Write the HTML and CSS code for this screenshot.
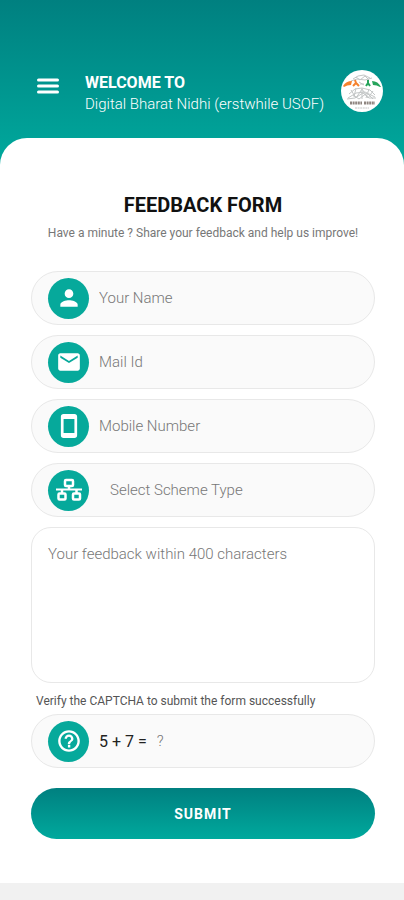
FILE: index.html
```
<!DOCTYPE html>
<html lang="en">
<head>
    <meta charset="UTF-8">
    <meta name="viewport" content="width=device-width, initial-scale=1.0">
    <title>Feedback Form</title>
    <link rel="stylesheet" href="styles.css">
</head>
<body>
    <header class="header">
        <button type="button" class="menu-btn" aria-label="Menu">
            <svg viewBox="0 0 22 16" width="22" height="16"><path d="M1.500 2h19M1.500 8h19M1.500 14h19" stroke="#fff" stroke-width="3" stroke-linecap="round"/></svg>
        </button>
        <div class="welcome">
            <p class="welcome-title">WELCOME TO</p>
            <p class="welcome-name">Digital Bharat Nidhi (erstwhile USOF)</p>
        </div>
        <svg class="logo" viewBox="0 0 42 42" role="img" aria-label="Digital Bharat Nidhi logo">
            <circle cx="21" cy="21" r="21" fill="#fff"/>
            <g fill="none" stroke="#c3c6c6" stroke-width="1">
                <path d="M12 9l5-3 6-1 6 3M10 11l6-2 8 1 7-2M15 7l4 3 5-4 4 4M19 14h4M18 12l5 3"/>
                <path d="M8 24l6-5 7-1 8 2 5 5M7 28l8-5 9-1 10 5M10 20l5 8 6-9 6 9 5-7M6 29l8-1 8-5 6 5h7M12 25l6 4 8-6 6 6M15 18l-2 9M21 18v11M28 19l-3 9"/>
            </g>
            <path d="M2 16q3-5 9-5l-1 4q-4 0-7 2z" fill="#f5822d"/>
            <path d="M40 17q-3-6-9-6l1 4q4 0 7 2z" fill="#26a45b"/>
            <path d="M14 10l1 3-3 3M15 13l3 3" stroke="#f5822d" stroke-width="2" fill="none"/>
            <path d="M27 10v3l-2 3M27 13l2 3" stroke="#26a45b" stroke-width="2" fill="none"/>
            <path d="M9 33h12M23 33h11" stroke="#8f8580" stroke-width="3" stroke-dasharray="2 0.600"/>
            <path d="M14 38h14" stroke="#c5c5c5" stroke-width="1" stroke-dasharray="2 0.600"/>
        </svg>
    </header>

    <main class="sheet">
        <h1 class="title">FEEDBACK FORM</h1>
        <p class="subtitle">Have a minute ? Share your feedback and help us improve!</p>

        <form class="form">
            <!-- text fields -->
            <div class="field">
                <label class="icon" for="name" aria-label="Your Name">
                    <svg viewBox="0 0 24 24"><path d="M12 12c2.200 0 4-1.800 4-4s-1.800-4-4-4-4 1.800-4 4 1.800 4 4 4zm0 2c-2.700 0-8 1.300-8 4v2h16v-2c0-2.700-5.300-4-8-4z"/></svg>
                </label>
                <input type="text" id="name" placeholder="Your Name">
            </div>
            <div class="field">
                <label class="icon" for="mail" aria-label="Mail Id">
                    <svg viewBox="0 0 24 24"><path d="M20 4H4c-1.100 0-2 .9-2 2v12c0 1.100.9 2 2 2h16c1.100 0 2-.9 2-2V6c0-1.100-.9-2-2-2zm0 4l-8 5-8-5V6l8 5 8-5z"/></svg>
                </label>
                <input type="email" id="mail" placeholder="Mail Id">
            </div>
            <div class="field">
                <label class="icon" for="mobile" aria-label="Mobile Number">
                    <svg viewBox="0 0 24 24"><path d="M17 1H7c-1.600 0-2.500.9-2.500 2.500v17c0 1.600.9 2.500 2.500 2.500h10c1.600 0 2.500-.9 2.500-2.500v-17C19.500 1.900 18.600 1 17 1zm0 17.500H7v-13h10z"/></svg>
                </label>
                <input type="tel" id="mobile" placeholder="Mobile Number">
            </div>
            <div class="field">
                <label class="icon" for="scheme" aria-label="Scheme Type">
                    <svg viewBox="0 0 26 26">
                        <g fill="none" stroke="#fff" stroke-width="2.500">
                            <rect x="9" y="3" width="8" height="6" rx="1"/>
                            <rect x="2.500" y="16.500" width="7" height="6" rx="1"/>
                            <rect x="17" y="16.500" width="7" height="6" rx="1"/>
                            <path d="M13 9v4M6 13v3M20.500 13v3"/>
                            <path d="M0 12.500h26" stroke-width="2"/>
                        </g>
                    </svg>
                </label>
                <select id="scheme">
                    <option>Select Scheme Type</option>
                </select>
            </div>
            <textarea class="message" aria-label="Your feedback" maxlength="400" placeholder="Your feedback within 400 characters"></textarea>

            <!-- captcha -->
            <label class="captcha-label" for="captcha">Verify the CAPTCHA to submit the form successfully</label>
            <div class="field">
                <span class="icon">
                    <svg viewBox="0 0 24 24"><path d="M11 18h2.200v-2.200H11zM12 2C6.500 2 2 6.500 2 12s4.500 10 10 10 10-4.500 10-10S17.500 2 12 2zm0 17.800c-4.300 0-7.800-3.500-7.800-7.800S7.700 4.200 12 4.200s7.800 3.500 7.800 7.800-3.500 7.800-7.800 7.800zM12 6c-2.300 0-4.100 1.800-4.100 4h2.200c0-1 .9-1.900 1.900-1.900s1.900.9 1.900 1.900c0 1.900-3 1.700-3 5h2.200c0-2.300 3-2.500 3-5 0-2.200-1.800-4-4.100-4z"/></svg>
                </span>
                <span class="sum">5 + 7 =</span>
                <input type="text" id="captcha" placeholder="?">
            </div>
            <button type="submit" class="submit-btn">SUBMIT</button>
        </form>
    </main>
</body>
</html>
```
FILE: styles.css
```
* {
    margin: 0;
    padding: 0;
    box-sizing: border-box;
}

body {
    min-height: 100vh;
    background: #f1f1f1;
    font-family: Roboto, "Liberation Sans", sans-serif;
    font-size: 15px;
}

/* top bar */
.header {
    display: flex;
    align-items: center;
    padding: 68px 21px 51px 37px;
    background: linear-gradient(#008080, #00a99d);
}

.menu-btn {
    flex: none;
    height: 28px;
    margin-bottom: 10px;
    border: none;
    background: none;
    cursor: pointer;
}

.menu-btn svg {
    display: block;
}

.welcome {
    flex: 1;
    margin: 4px 0 0 26px;
    color: #fff;
}

.welcome-title {
    font-size: 16px;
    font-weight: 700;
    line-height: 22px;
}

.welcome-name {
    font-size: 15px;
    font-weight: 300;
    line-height: 20px;
}

.logo {
    flex: none;
    width: 42px;
    height: 42px;
}

/* white sheet over the header */
.sheet {
    margin-top: -27px;
    padding: 55px 29px 44px 31px;
    border-radius: 27px 27px 0 0;
    background: #fff;
}

.title {
    color: #111;
    font-size: 20px;
    font-weight: 700;
    line-height: 24px;
    text-align: center;
}

.subtitle {
    margin-top: 8px;
    color: #777;
    font-size: 12px;
    line-height: 16px;
    text-align: center;
}

.form {
    display: flex;
    flex-direction: column;
    gap: 10px;
    margin-top: 30px;
}

.field {
    display: flex;
    align-items: center;
    height: 54px;
    padding: 0 16px;
    border: 1px solid #e8e8e8;
    border-radius: 27px;
    background: #fafafa;
}

.icon {
    display: flex;
    flex: none;
    align-items: center;
    justify-content: center;
    width: 41px;
    height: 41px;
    border-radius: 50%;
    background: #06a99b;
}

.icon svg {
    width: 26px;
    height: 26px;
    fill: #fff;
}

.field input,
.field select {
    flex: 1;
    min-width: 0;
    height: 40px;
    margin-left: 10px;
    border: none;
    outline: none;
    background: none;
    color: #777;
    font: inherit;
    font-weight: 300;
}

.field select {
    margin-left: 21px;
    appearance: none;
}

::placeholder {
    color: #777;
    opacity: 1;
}

.message {
    width: 100%;
    height: 156px;
    padding: 16px;
    border: 1px solid #e8e8e8;
    border-radius: 20px;
    outline: none;
    resize: none;
    background: #fff;
    font: inherit;
    font-weight: 300;
    line-height: 20px;
}

.captcha-label {
    margin: 0 5px -5px;
    color: #555;
    font-size: 12px;
    line-height: 16px;
}

.sum {
    margin-left: 10px;
    color: #222;
    font-size: 16px;
}

.submit-btn {
    height: 51px;
    margin-top: 10px;
    border: none;
    border-radius: 26px;
    background: linear-gradient(#008080, #00a99d);
    color: #fff;
    font-family: inherit;
    font-size: 14px;
    font-weight: 700;
    letter-spacing: 1px;
    cursor: pointer;
}
```
